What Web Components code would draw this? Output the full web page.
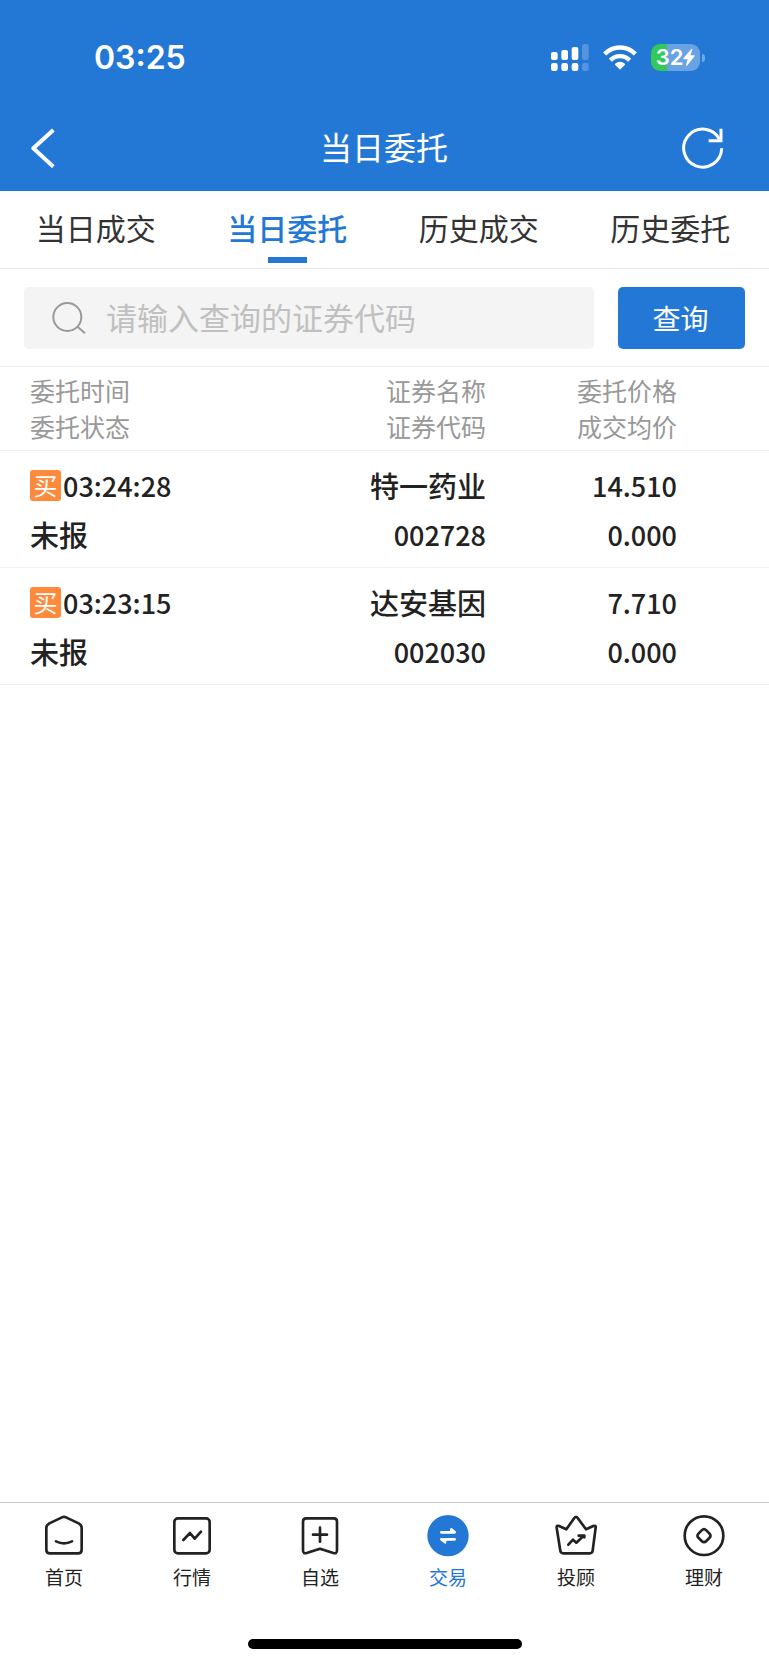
<!DOCTYPE html>
<html lang="zh-CN">
<head>
<meta charset="utf-8">
<meta name="viewport" content="width=device-width, initial-scale=1">
<title>当日委托</title>
<style>
    :root {
        --brand: #2478d5;
        --ink: #222;
        --muted: #999;
        --line: #f0f0f0;
    }
    body {
        margin: 0;
        background: #fff;
        color: var(--ink);
        font-family: "Noto Sans CJK SC", sans-serif;
    }
</style>
</head>
<body>
<trade-app>
    <status-bar slot="header" time="03:25" battery="32"></status-bar>
    <nav-header slot="header">当日委托</nav-header>
    <tab-strip>
        <tab-item>当日成交</tab-item>
        <tab-item active>当日委托</tab-item>
        <tab-item>历史成交</tab-item>
        <tab-item>历史委托</tab-item>
    </tab-strip>
    <search-row placeholder="请输入查询的证券代码">查询</search-row>
    <order-table></order-table>
    <bottom-nav slot="footer">
        <nav-item icon="home">首页</nav-item>
        <nav-item icon="market">行情</nav-item>
        <nav-item icon="watch">自选</nav-item>
        <nav-item icon="trade" active>交易</nav-item>
        <nav-item icon="advisor">投顾</nav-item>
        <nav-item icon="wealth">理财</nav-item>
    </bottom-nav>
</trade-app>

<script>
class BaseElement extends HTMLElement {
    constructor() {
        super();
        this.attachShadow({ mode: 'open' });
    }

    connectedCallback() {
        this.shadowRoot.innerHTML = this.template();
    }
}

class TradeApp extends BaseElement {
    template() {
        return `
            <style>
                :host {
                    display: flex;
                    flex-direction: column;
                    min-height: 100vh;
                }
                header {
                    background: var(--brand);
                    color: #fff;
                }
                main {
                    flex: 1;
                }
            </style>
            <header><slot name="header"></slot></header>
            <main><slot></slot></main>
            <slot name="footer"></slot>
        `;
    }
}

class StatusBar extends BaseElement {
    template() {
        return `
            <style>
                :host {
                    display: flex;
                    align-items: center;
                    justify-content: space-between;
                    height: 95px;
                    padding: 10px 64px 0 94px;
                    font-family: Inter, sans-serif;
                }
                time {
                    font-size: 32px;
                    font-weight: 600;
                }
                .icons {
                    display: flex;
                    align-items: center;
                }
                .signal {
                    margin-right: 14px;
                }
                .wifi {
                    margin-right: 14px;
                }
                .battery {
                    display: flex;
                    align-items: center;
                    justify-content: center;
                    width: 49px;
                    height: 27px;
                    border-radius: 9px;
                    background: linear-gradient(90deg, #34c759 32%, rgba(255, 255, 255, 0.32) 32%);
                    font-size: 22px;
                    font-weight: 600;
                    line-height: 27px;
                }
                .cap {
                    width: 3px;
                    height: 8px;
                    margin-left: 2px;
                    border-radius: 0 3px 3px 0;
                    background: rgba(255, 255, 255, 0.35);
                }
            </style>
            <time>${this.getAttribute('time')}</time>
            <div class="icons">
                <svg class="signal" width="38" height="27" viewBox="0 0 114 81" fill="#fff" aria-hidden="true">
                    <rect x="0" y="24" width="20" height="24" rx="6"/>
                    <rect x="31" y="18" width="20" height="30" rx="6"/>
                    <rect x="62" y="9" width="20" height="39" rx="6"/>
                    <rect x="93" y="0" width="20" height="48" rx="6" opacity=".22"/>
                    <rect x="0" y="57" width="20" height="24" rx="7"/>
                    <rect x="31" y="57" width="20" height="24" rx="7"/>
                    <rect x="62" y="57" width="20" height="24" rx="7"/>
                    <rect x="93" y="57" width="20" height="24" rx="7" opacity=".22"/>
                </svg>
                <svg class="wifi" width="34" height="26" viewBox="0 0 102 78" fill="none" stroke="#fff" stroke-width="13" aria-hidden="true">
                    <path d="M5 27A64 64 0 0 1 97 27"/>
                    <path d="M22 46A40 40 0 0 1 80 46"/>
                    <path d="M39 58Q51 49 63 58L51 70Z" fill="#fff" stroke-width="6" stroke-linejoin="round"/>
                </svg>
                <div class="battery">
                    ${this.getAttribute('battery')}
                    <svg width="12" height="17" viewBox="0 0 36 51" fill="#fff" aria-hidden="true">
                        <path d="M25 0L1 28Q0 31 3 31H14L9 49Q10 52 13 49L35 22Q36 19 33 19H22L28 2Q28-1 25 0Z"/>
                    </svg>
                </div>
                <span class="cap"></span>
            </div>
        `;
    }
}

class NavHeader extends BaseElement {
    template() {
        return `
            <style>
                :host {
                    display: grid;
                    grid-template-columns: 1fr auto 1fr;
                    align-items: center;
                    height: 86px;
                    padding: 0 45px 0 31px;
                }
                h1 {
                    margin: 0 0 0 13px;
                    padding-bottom: 4px;
                    font-size: 32px;
                    font-weight: 400;
                    line-height: 48px;
                }
                button {
                    display: flex;
                    padding: 0;
                    border: 0;
                    background: none;
                    color: inherit;
                }
                .refresh {
                    justify-self: end;
                }
                svg {
                    fill: none;
                    stroke: currentColor;
                }
            </style>
            <button aria-label="返回">
                <svg width="24" height="40" viewBox="0 0 72 120" stroke-width="12">
                    <path d="M67 6L7 61L67 116" stroke-linejoin="round"/>
                </svg>
            </button>
            <h1><slot></slot></h1>
            <button class="refresh" aria-label="刷新">
                <svg width="42" height="42" viewBox="0 0 126 126" stroke-width="9">
                    <path d="M119 64A57 57 0 1 1 112 36"/>
                    <path d="M117 5V41H80"/>
                </svg>
            </button>
        `;
    }
}

class TabStrip extends BaseElement {
    template() {
        return `
            <style>
                :host {
                    display: block;
                    border-bottom: 1px solid #e8e8e8;
                }
                nav {
                    display: flex;
                    padding-right: 3px;
                }
            </style>
            <nav><slot></slot></nav>
        `;
    }
}

class TabItem extends BaseElement {
    template() {
        return `
            <style>
                :host {
                    display: block;
                    flex: 1;
                }
                a {
                    display: flex;
                    flex-direction: column;
                    align-items: center;
                    height: 77px;
                    padding: 16px 0 5px;
                    color: #333;
                    font-size: 30px;
                    line-height: 40px;
                    text-decoration: none;
                    box-sizing: border-box;
                }
                a::after {
                    content: "";
                    width: 39px;
                    height: 6px;
                    margin-top: auto;
                }
                :host([active]) a {
                    color: var(--brand);
                    font-weight: 500;
                }
                :host([active]) a::after {
                    background: var(--brand);
                }
            </style>
            <a href="#"><slot></slot></a>
        `;
    }
}

class SearchRow extends BaseElement {
    template() {
        return `
            <style>
                :host {
                    display: block;
                    border-bottom: 1px solid var(--line);
                }
                form {
                    display: flex;
                    gap: 24px;
                    padding: 18px 24px 17px;
                }
                label {
                    display: flex;
                    flex: 1;
                    align-items: center;
                    gap: 20px;
                    min-width: 0;
                    height: 62px;
                    padding: 0 28px;
                    border-radius: 5px;
                    background: #f4f4f4;
                    box-sizing: border-box;
                }
                svg {
                    flex: none;
                }
                input {
                    flex: 1;
                    min-width: 0;
                    padding: 0 0 2px;
                    border: 0;
                    outline: 0;
                    background: none;
                    color: var(--ink);
                    font: inherit;
                    font-size: 31px;
                    line-height: 46px;
                }
                input::placeholder {
                    color: #c0c0c0;
                }
                button {
                    width: 127px;
                    height: 62px;
                    padding: 0 2px 0 0;
                    border: 0;
                    border-radius: 5px;
                    background: var(--brand);
                    color: #fff;
                    font: inherit;
                    font-size: 28px;
                }
            </style>
            <form>
                <label>
                    <svg width="34" height="34" viewBox="0 0 102 102" fill="none" stroke="#999" stroke-width="6" aria-hidden="true">
                        <circle cx="46" cy="48" r="42"/>
                        <path d="M75 76L99 97"/>
                    </svg>
                    <input type="text" aria-label="证券代码" placeholder="${this.getAttribute('placeholder')}">
                </label>
                <button type="button"><slot></slot></button>
            </form>
        `;
    }
}

const ORDERS = [
    { side: '买', time: '03:24:28', status: '未报', name: '特一药业', code: '002728', price: '14.510', average: '0.000' },
    { side: '买', time: '03:23:15', status: '未报', name: '达安基因', code: '002030', price: '7.710', average: '0.000' }
];

class OrderTable extends BaseElement {
    row(order) {
        return `
            <tr>
                <td><div class="first num"><span class="side">${order.side}</span>${order.time}</div><div>${order.status}</div></td>
                <td><div>${order.name}</div><div class="num">${order.code}</div></td>
                <td><div class="num">${order.price}</div><div class="num">${order.average}</div></td>
            </tr>
        `;
    }

    template() {
        return `
            <style>
                :host {
                    display: block;
                }
                table {
                    width: 100%;
                    border-collapse: separate;
                    border-spacing: 0;
                    table-layout: fixed;
                }
                th, td {
                    border-bottom: 1px solid var(--line);
                    text-align: right;
                    box-sizing: border-box;
                }
                th {
                    padding: 5px 0 6px;
                    color: var(--muted);
                    font-size: 25px;
                    font-weight: 400;
                    line-height: 36px;
                }
                td {
                    padding: 10px 0 8px;
                    font-size: 29px;
                    font-weight: 500;
                    line-height: 49px;
                }
                .num {
                    font-size: 27px;
                }
                th:first-child, td:first-child {
                    padding-left: 30px;
                    text-align: left;
                }
                th:nth-child(2) {
                    width: 200px;
                }
                th:last-child {
                    width: 283px;
                }
                th:last-child, td:last-child {
                    padding-right: 92px;
                }
                .first {
                    display: flex;
                    align-items: center;
                    gap: 2px;
                }
                .side {
                    width: 31px;
                    height: 31px;
                    border-radius: 3px;
                    background: #ff8a3b;
                    color: #fff;
                    font-size: 24px;
                    font-weight: 400;
                    line-height: 29px;
                    text-align: center;
                }
            </style>
            <table>
                <thead>
                    <tr>
                        <th><div>委托时间</div><div>委托状态</div></th>
                        <th><div>证券名称</div><div>证券代码</div></th>
                        <th><div>委托价格</div><div>成交均价</div></th>
                    </tr>
                </thead>
                <tbody>${ORDERS.map(this.row).join('')}</tbody>
            </table>
        `;
    }
}

class BottomNav extends BaseElement {
    template() {
        return `
            <style>
                :host {
                    display: block;
                    border-top: 1px solid #c8c8c8;
                    padding-bottom: 16px;
                }
                nav {
                    display: flex;
                    padding: 12px 1px 48px 0;
                }
                .indicator {
                    width: 274px;
                    height: 10px;
                    margin: 0 auto;
                    border-radius: 5px;
                    background: #000;
                }
            </style>
            <nav><slot></slot></nav>
            <div class="indicator"></div>
        `;
    }
}

// All icons share a 126 unit box
const ICONS = {
    home: `
        <path d="M57 7Q63 4 69 7L107 25Q116 30 116 38V104Q116 115 105 115H21Q10 115 10 104V38Q10 30 19 25Z"/>
        <path d="M39 79Q63 91 87 79"/>`,
    market: `
        <rect x="10" y="10" width="106" height="105" rx="11"/>
        <path d="M37 75L57 54L71 71L90 50"/>`,
    watch: `
        <path d="M22 10H104Q114 10 114 20V106Q114 117 103 114L63 101L23 114Q12 117 12 106V20Q12 10 22 10Z"/>
        <path d="M42 59H84M63 38V80"/>`,
    trade: `
        <circle cx="63" cy="62" r="62" fill="currentColor" stroke="none"/>
        <g stroke="#fff" fill="#fff"><path d="M43 52H83L73 43V52"/><path d="M83 73H43L54 82V73"/></g>`,
    advisor: `
        <path d="M58 9Q63 2 68 9L93 43L115 33Q123 30 122 38L113 107Q112 115 104 115H25Q17 115 16 107L5 38Q4 30 12 33L34 43Z"/>
        <path d="M40 89L54 74L64 83L86 62M71 62H88V67"/>`,
    wealth: `
        <circle cx="63" cy="62" r="58"/>
        <path d="M56 46Q63 39 70 46L79 55Q86 62 79 69L70 78Q63 85 56 78L47 69Q40 62 47 55Z"/>`
};

class NavItem extends BaseElement {
    template() {
        return `
            <style>
                :host {
                    display: block;
                    flex: 1;
                }
                a {
                    display: flex;
                    flex-direction: column;
                    align-items: center;
                    gap: 6px;
                    color: var(--ink);
                    font-size: 19px;
                    line-height: 28px;
                    text-decoration: none;
                }
                :host([active]) a {
                    color: var(--brand);
                }
                svg {
                    fill: none;
                    stroke: currentColor;
                    stroke-width: 8;
                    stroke-linecap: round;
                    stroke-linejoin: round;
                }
            </style>
            <a href="#">
                <svg width="42" height="42" viewBox="0 0 126 126" aria-hidden="true">${ICONS[this.getAttribute('icon')]}</svg>
                <slot></slot>
            </a>
        `;
    }
}

customElements.define('trade-app', TradeApp);
customElements.define('status-bar', StatusBar);
customElements.define('nav-header', NavHeader);
customElements.define('tab-strip', TabStrip);
customElements.define('tab-item', TabItem);
customElements.define('search-row', SearchRow);
customElements.define('order-table', OrderTable);
customElements.define('bottom-nav', BottomNav);
customElements.define('nav-item', NavItem);
</script>
</body>
</html>
